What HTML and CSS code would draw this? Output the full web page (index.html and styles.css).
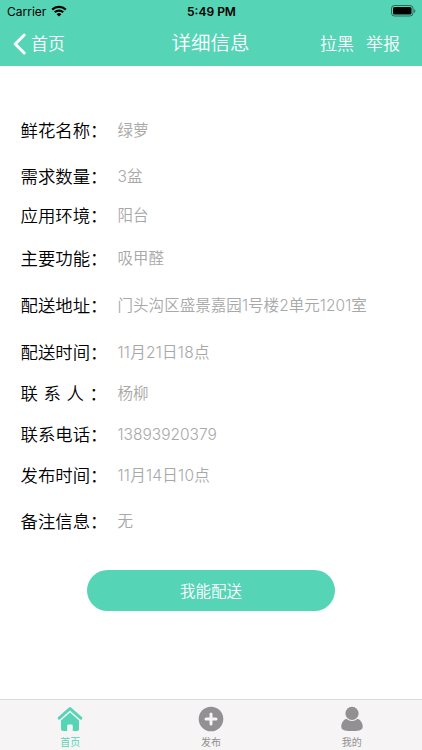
FILE: index.html
```html
<!DOCTYPE html>
<html lang="zh-CN">
<head>
    <meta charset="UTF-8">
    <meta name="viewport" content="width=device-width, initial-scale=1.0">
    <title>详细信息</title>
    <link rel="stylesheet" href="styles.css">
</head>
<body>
    <header>
        <div class="status">
            <div class="carrier">
                <span>Carrier</span>
                <svg width="16" height="12" viewBox="0 0 16 12" fill="none" stroke="#000" stroke-width="2.2">
                    <path d="M1.2 4.6a9.8 9.8 0 0 1 13.6 0"/>
                    <path d="M3.8 7.3a6 6 0 0 1 8.4 0"/>
                    <path d="M8 11.6L5.6 9.2a3.4 3.4 0 0 1 4.8 0z" fill="#000" stroke="none"/>
                </svg>
            </div>
            <div class="clock">5:49 PM</div>
            <svg class="battery" width="25" height="12" viewBox="0 0 25 12">
                <rect x="0.5" y="0.5" width="21.5" height="10.5" rx="3" fill="none" stroke="#000" stroke-opacity="0.5"/>
                <rect x="2" y="2" width="18.5" height="7.5" rx="1.6"/>
                <path d="M23.2 4v4a2.3 2.3 0 0 0 0-4z" fill-opacity="0.5"/>
            </svg>
        </div>
        <nav class="navbar">
            <a class="back">
                <svg width="14" height="22" viewBox="0 0 14 22" fill="none" stroke="#fff" stroke-width="3" stroke-linecap="round" stroke-linejoin="round">
                    <path d="M11.2 2L2.2 11l9 9"/>
                </svg>
                <span>首页</span>
            </a>
            <h1>详细信息</h1>
            <div class="actions">
                <a>拉黑</a>
                <a>举报</a>
            </div>
        </nav>
    </header>

    <main>
        <dl class="details">
            <div class="row"><dt>鲜花名称：</dt><dd>绿萝</dd></div>
            <div class="row gap-l"><dt>需求数量：</dt><dd>3盆</dd></div>
            <div class="row gap-s"><dt>应用环境：</dt><dd>阳台</dd></div>
            <div class="row gap-m"><dt>主要功能：</dt><dd>吸甲醛</dd></div>
            <div class="row gap-xl"><dt>配送地址：</dt><dd class="address">门头沟区盛景嘉园1号楼2单元1201室</dd></div>
            <div class="row gap-xl"><dt>配送时间：</dt><dd class="date">11月21日18点</dd></div>
            <div class="row"><dt class="spaced">联 系 人 ：</dt><dd>杨柳</dd></div>
            <div class="row"><dt>联系电话：</dt><dd>13893920379</dd></div>
            <div class="row"><dt>发布时间：</dt><dd class="date">11月14日10点</dd></div>
            <div class="row gap-l"><dt>备注信息：</dt><dd>无</dd></div>
        </dl>
        <button type="button" class="deliver">我能配送</button>
    </main>

    <footer class="tabbar">
        <a class="tab active">
            <svg width="26" height="26" viewBox="0 0 26 26">
                <path d="M2.2 12.2L13 2.5l10.8 9.7" fill="none" stroke="currentColor" stroke-width="3" stroke-linecap="round" stroke-linejoin="round"/>
                <path d="M13 6.4l9 8v8.7a2 2 0 0 1-2 2h-4.200v-5.200a1.400 1.400 0 0 0-1.400-1.400h-2.800a1.400 1.400 0 0 0-1.400 1.400v5.200H6a2 2 0 0 1-2-2V14.400z" fill="currentColor"/>
            </svg>
            <span>首页</span>
        </a>
        <a class="tab">
            <svg width="26" height="26" viewBox="0 0 26 26">
                <circle cx="13" cy="13" r="12.3" fill="currentColor"/>
                <path d="M13 8v10M8 13h10" stroke="#f6f4f5" stroke-width="3" stroke-linecap="round"/>
            </svg>
            <span>发布</span>
        </a>
        <a class="tab">
            <svg width="26" height="26" viewBox="0 0 26 26" fill="currentColor">
                <circle cx="13" cy="7.4" r="6.6"/>
                <path d="M7.6 12.7c3 3 7.800 3 10.800 0 3.200 0.900 5.300 4.200 5.300 7.800 0 2.800-1.700 4.600-10.700 4.600S2.300 23.300 2.300 20.500c0-3.600 2.100-6.900 5.300-7.800z"/>
            </svg>
            <span>我的</span>
        </a>
    </footer>
</body>
</html>
```
FILE: styles.css
```css
* {
    box-sizing: border-box;
}

body {
    margin: 0;
    height: 750px;
    display: flex;
    flex-direction: column;
    background: #fff;
    font-family: Inter, "Noto Sans CJK SC", sans-serif;
    overflow: hidden;
}

header {
    height: 66px;
    background: #56d4b6;
}

.status {
    height: 22px;
    padding: 0 6px 0 7px;
    display: grid;
    grid-template-columns: 1fr auto 1fr;
    align-items: center;
    font-size: 12px;
    color: #000;
}

.carrier {
    display: flex;
    align-items: center;
    gap: 5px;
}

.clock {
    font-weight: 600;
}

.battery {
    justify-self: end;
}

.navbar {
    height: 42px;
    padding: 0 22px 0 13px;
    display: grid;
    grid-template-columns: 1fr 78px 1fr;
    align-items: center;
    color: #fff;
    font-size: 17px;
    font-weight: 350;
}

.navbar h1 {
    margin: 0 -5px 0 4px;
    font-size: 19.5px;
    font-weight: 350;
    line-height: 24px;
    white-space: nowrap;
}

.back {
    display: flex;
    align-items: center;
    gap: 4px;
}

.back svg {
    margin-top: 1px;
}

.back span,
.actions {
    padding-bottom: 2px;
}

.actions {
    display: flex;
    justify-content: flex-end;
    gap: 12px;
}

main {
    flex: 1;
    padding-top: 53px;
}

.details {
    margin: 0;
    padding-left: 20.5px;
}

.row {
    height: 24px;
    margin-top: 17px;
    display: flex;
    align-items: center;
    line-height: 24px;
}

.row:first-child {
    margin-top: 0;
}

/* uneven spacing between groups */
.gap-s {
    margin-top: 15px;
}

.gap-m {
    margin-top: 19px;
}

.gap-l {
    margin-top: 22px;
}

.gap-xl {
    margin-top: 23px;
}

dt {
    width: 97px;
    font-size: 17.4px;
    font-weight: 350;
    color: #000;
    white-space: nowrap;
}

.spaced {
    word-spacing: 0.7px;
}

dd {
    margin: 0;
    font-size: 15.5px;
    font-weight: 350;
    color: #a8a8a8;
    white-space: nowrap;
}

.address {
    letter-spacing: 0.05px;
}

.date {
    letter-spacing: 0.25px;
}

.deliver {
    display: block;
    width: 248px;
    height: 41px;
    margin: 36px 0 0 87px;
    padding: 0 0 1px;
    border: none;
    border-radius: 21px;
    background: #56d4b6;
    color: #fff;
    font-family: inherit;
    font-size: 15.5px;
    font-weight: 350;
}

.tabbar {
    height: 51px;
    display: flex;
    border-top: 1px solid #d9d9d9;
    background: #f6f4f5;
}

.tab {
    flex: 1;
    padding-top: 6px;
    display: flex;
    flex-direction: column;
    align-items: center;
    color: #929092;
    font-size: 10px;
    line-height: 20px;
}

.tab svg {
    flex-shrink: 0;
}

.tab.active {
    color: #56d4b6;
}
```
